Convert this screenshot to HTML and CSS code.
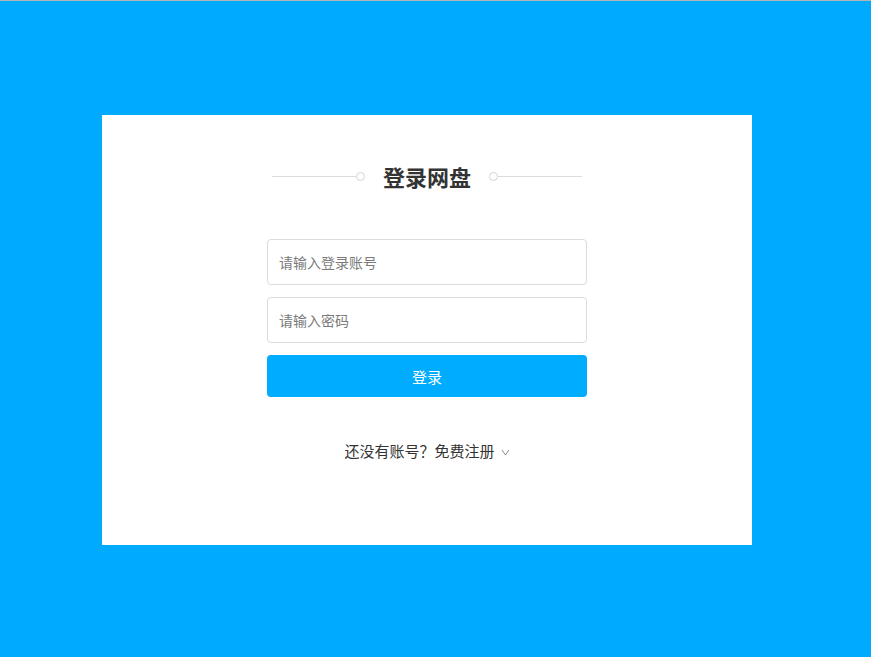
FILE: index.html
```html
<!DOCTYPE html>
<html lang="zh-CN">
<head>
<meta charset="utf-8">
<title>登录网盘</title>
<link rel="stylesheet" href="styles.css">
</head>
<body>
<div class="page">
  <div class="card">
    <div class="title-row">
      <span class="line"></span>
      <span class="dot"></span>
      <h1 class="title">登录网盘</h1>
      <span class="dot"></span>
      <span class="line"></span>
    </div>
    <form class="form">
      <input class="field" type="text" placeholder="请输入登录账号">
      <input class="field" type="password" placeholder="请输入密码">
      <button class="submit" type="button">登录</button>
    </form>
    <div class="register">
      <span>还没有账号？免费注册</span>
      <svg class="chev" width="9" height="7" viewBox="0 0 9 7"><path d="M1 1 L4.5 6 L8 1" fill="none" stroke="#8a8a8a" stroke-width="1"/></svg>
    </div>
  </div>
</div>
</body>
</html>
```

FILE: styles.css
```css
html, body {
  margin: 0;
  padding: 0;
}
body {
  background: #00aaff;
  border-top: 1px solid #b4b4b4;
  font-family: "Noto Sans CJK SC", "Noto Sans", sans-serif;
  height: 656px;
  overflow: hidden;
}
.page {
  padding-top: 114px;
  padding-left: 102px;
}
.card {
  width: 650px;
  height: 430px;
  background: #fff;
  box-sizing: border-box;
  padding-top: 47px;
  display: flex;
  flex-direction: column;
  align-items: center;
}
.title-row {
  width: 310px;
  height: 30px;
  display: flex;
  align-items: center;
}
.line {
  flex: 1;
  height: 1px;
  background: #dcdcdc;
  margin-top: -2px;
}
.dot {
  width: 7px;
  height: 7px;
  border: 1px solid #d4d4d8;
  border-radius: 50%;
  background: #fff;
  margin-top: -2px;
}
.title {
  margin: 0 18px;
  font-size: 22px;
  font-weight: bold;
  color: #333;
  line-height: 30px;
  position: relative;
  top: -1px;
}
.form {
  margin-top: 47px;
  width: 320px;
  display: flex;
  flex-direction: column;
  gap: 12px;
}
.field {
  height: 46px;
  box-sizing: border-box;
  border: 1px solid #dcdcdc;
  border-radius: 4px;
  padding: 0 11px;
  font-family: inherit;
  font-size: 14px;
  color: #333;
  outline: none;
}
.field::placeholder {
  color: #7a7a7a;
}
.submit {
  height: 42px;
  border: none;
  border-radius: 4px;
  background: #00acff;
  color: #fff;
  font-family: inherit;
  font-size: 15px;
}
.register {
  margin-top: 44px;
  font-size: 15px;
  line-height: 20px;
  color: #333;
  display: flex;
  align-items: center;
  gap: 6px;
}
.chev {
  margin-top: 2px;
}
```
